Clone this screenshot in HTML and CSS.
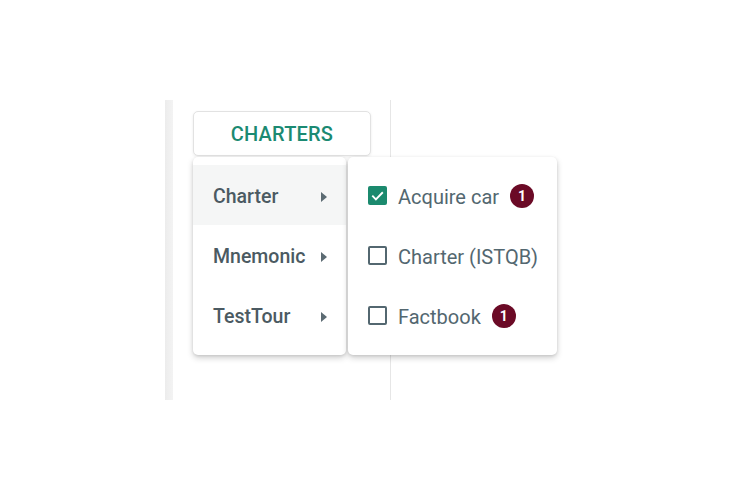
FILE: index.html
```html
<!DOCTYPE html>
<html>
<head>
<meta charset="utf-8">
<link rel="stylesheet" href="styles.css">
</head>
<body>
<div class="stage">
  <div class="side-bar"></div>
  <div class="panel">
    <button class="charters-btn">Charters</button>
  </div>
</div>

<div class="menu menu-main">
  <div class="menu-item active"><span>Charter</span><span class="caret"></span></div>
  <div class="menu-item"><span>Mnemonic</span><span class="caret"></span></div>
  <div class="menu-item"><span>TestTour</span><span class="caret"></span></div>
</div>

<div class="menu menu-sub">
  <div class="check-item">
    <span class="box checked"><svg viewBox="0 0 20 20" width="19" height="19"><path d="M4.5 10.2 L8.3 14 L15.6 6.6" fill="none" stroke="#fff" stroke-width="2"/></svg></span>
    <span class="label">Acquire car</span>
    <span class="badge">1</span>
  </div>
  <div class="check-item">
    <span class="box"></span>
    <span class="label">Charter (ISTQB)</span>
  </div>
  <div class="check-item">
    <span class="box"></span>
    <span class="label">Factbook</span>
    <span class="badge">1</span>
  </div>
</div>
</body>
</html>
```

FILE: styles.css
```css
html, body {
  margin: 0;
  padding: 0;
  background: #ffffff;
  font-family: Roboto, "Liberation Sans", sans-serif;
}

.stage {
  display: flex;
  margin: 100px 0 0 165px;
  height: 300px;
}

.side-bar {
  width: 8px;
  background: linear-gradient(to right, #ececec, #f3f3f3);
}

.panel {
  width: 218px;
  border-right: 1px solid #e6e6e6;
  padding: 11px 0 0 20px;
  box-sizing: border-box;
}

.charters-btn {
  width: 178px;
  height: 45px;
  background: #fff;
  border: 1px solid #e2e2e2;
  border-radius: 5px;
  box-shadow: 0 1px 3px rgba(0,0,0,0.08);
  color: #1b8a72;
  font-family: Roboto, "Liberation Sans", sans-serif;
  font-size: 20px;
  font-weight: 500;
  text-transform: uppercase;
  letter-spacing: 0.2px;
  padding: 0;
}

.menu {
  position: absolute;
  top: 157px;
  background: #fff;
  border-radius: 5px;
  box-shadow: 0 3px 6px rgba(0,0,0,0.18), 0 1px 3px rgba(0,0,0,0.1);
  padding: 8px 0;
  box-sizing: border-box;
  height: 198px;
}

.menu-main {
  left: 193px;
  width: 153px;
}

.menu-sub {
  left: 348px;
  width: 209px;
}

.menu-item {
  height: 60px;
  display: flex;
  align-items: center;
  justify-content: space-between;
  padding: 3px 19px 0 20px;
  box-sizing: border-box;
  font-size: 19.5px;
  font-weight: 500;
  color: #4b5a62;
  white-space: nowrap;
}

.menu-item.active {
  background: #f5f6f6;
}

.caret {
  width: 0;
  height: 0;
  border-top: 5px solid transparent;
  border-bottom: 5px solid transparent;
  border-left: 6px solid #5c6b73;
}

.check-item {
  height: 60px;
  display: flex;
  align-items: center;
  padding: 3px 0 0 20px;
  box-sizing: border-box;
  font-size: 20px;
  color: #536770;
  white-space: nowrap;
}

.box {
  flex-shrink: 0;
  width: 19px;
  height: 19px;
  box-sizing: border-box;
  border: 2px solid #536770;
  border-radius: 2px;
  margin: -2px 11px 0 0;
  display: flex;
}

.box.checked {
  background: #1b8a6e;
  border: none;
}

.badge {
  flex-shrink: 0;
  width: 24px;
  height: 24px;
  border-radius: 50%;
  background: #6b0a26;
  color: #fff;
  font-size: 14px;
  font-weight: 700;
  display: flex;
  align-items: center;
  justify-content: center;
  margin: -2px 0 0 11px;
}
```
